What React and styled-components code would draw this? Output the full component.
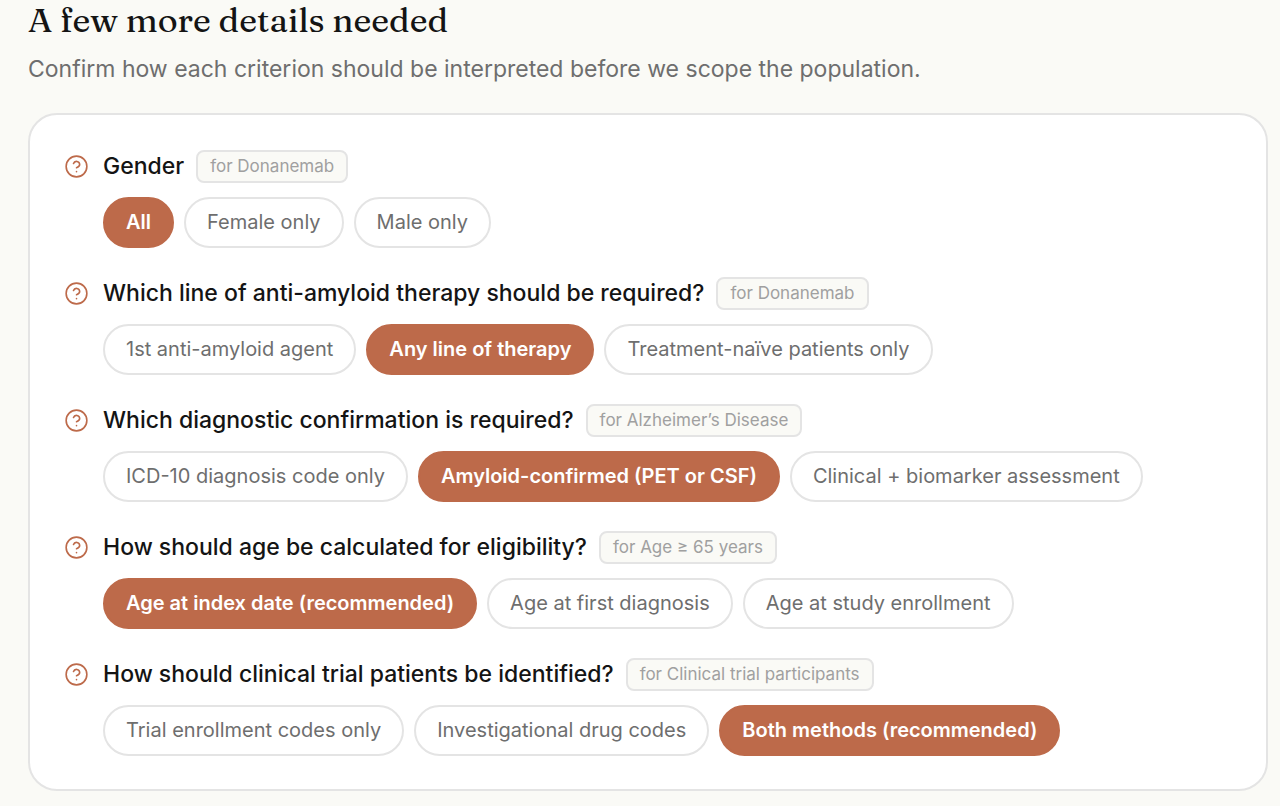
import React, { useState } from "react";
import styled, { createGlobalStyle } from "styled-components";

const GlobalStyle = createGlobalStyle`
  *, *::before, *::after { box-sizing: border-box; }
  body {
    margin: 0;
    background: #fafaf6;
    color: #141414;
    font-family: Inter, "Liberation Sans", sans-serif;
    -webkit-font-smoothing: antialiased;
  }
`;

const Page = styled.main`
  padding: 0 12px 15px 28px;
`;

const Title = styled.h1`
  margin: 0;
  font-family: Fraunces, "Liberation Serif", serif;
  font-size: 34px;
  line-height: 40px;
  font-weight: 500;
`;

const Subtitle = styled.p`
  margin: 13px 0 27px;
  color: #6e6e6e;
  font-size: 23px;
  line-height: 33px;
`;

const Card = styled.section`
  display: flex;
  flex-direction: column;
  gap: 29px;
  padding: 35px 35px 33px;
  background: #ffffff;
  border: 2px solid #e4e4e4;
  border-radius: 29px;
`;

const Question = styled.div`
  display: grid;
  grid-template-columns: 23px 1fr;
  column-gap: 15px;
  row-gap: 14px;
  align-items: center;
`;

const Heading = styled.div`
  display: flex;
  flex-wrap: wrap;
  align-items: center;
  gap: 12px;
`;

const Prompt = styled.h2`
  margin: 0;
  font-size: 23px;
  line-height: 33px;
  font-weight: 500;
`;

const Tag = styled.span`
  height: 33px;
  padding: 0 12px;
  background: #fafaf6;
  border: 2px solid #e4e4e4;
  border-radius: 8px;
  color: #a0a0a0;
  font-size: 17px;
  line-height: 29px;
`;

const Options = styled.div`
  grid-column: 2;
  display: flex;
  flex-wrap: wrap;
  gap: 10px;
`;

const Pill = styled.button`
  height: 51px;
  padding: 0 21px;
  border: 2px solid ${(p) => (p.$selected ? "#bd6a4a" : "#e4e4e4")};
  border-radius: 26px;
  background: ${(p) => (p.$selected ? "#bd6a4a" : "#ffffff")};
  color: ${(p) => (p.$selected ? "#ffffff" : "#6e6e6e")};
  font-family: inherit;
  font-size: 20px;
  line-height: 47px;
  font-weight: ${(p) => (p.$selected ? 600 : 400)};
  cursor: pointer;
`;

const Icon = styled.svg`
  display: block;
  width: 23px;
  height: 23px;
  fill: none;
  stroke: #bd6a4a;
  stroke-width: 1.7;
  stroke-linecap: round;
  stroke-linejoin: round;
`;

const QuestionIcon = () => (
  <Icon viewBox="0 0 24 24" aria-hidden="true">
    <circle cx="12" cy="12" r="10.8" />
    <path d="M8.9 8.9a3.3 3.3 0 0 1 6.4 1.1c0 2.2-3.3 3.3-3.3 3.3" />
    <path d="M12 17.4h.01" />
  </Icon>
);

const questions = [
  {
    id: "gender",
    prompt: "Gender",
    tag: "for Donanemab",
    options: ["All", "Female only", "Male only"],
    initial: 0,
  },
  {
    id: "line",
    prompt: "Which line of anti-amyloid therapy should be required?",
    tag: "for Donanemab",
    options: ["1st anti-amyloid agent", "Any line of therapy", "Treatment-naïve patients only"],
    initial: 1,
  },
  {
    id: "diagnostic",
    prompt: "Which diagnostic confirmation is required?",
    tag: "for Alzheimer’s Disease",
    options: ["ICD-10 diagnosis code only", "Amyloid-confirmed (PET or CSF)", "Clinical + biomarker assessment"],
    initial: 1,
  },
  {
    id: "age",
    prompt: "How should age be calculated for eligibility?",
    tag: "for Age ≥ 65 years",
    options: ["Age at index date (recommended)", "Age at first diagnosis", "Age at study enrollment"],
    initial: 0,
  },
  {
    id: "trial",
    prompt: "How should clinical trial patients be identified?",
    tag: "for Clinical trial participants",
    options: ["Trial enrollment codes only", "Investigational drug codes", "Both methods (recommended)"],
    initial: 2,
  },
];

function QuestionBlock({ id, prompt, tag, options, initial }) {
  const [selected, setSelected] = useState(initial);
  return (
    <Question>
      <QuestionIcon />
      <Heading>
        <Prompt id={id}>{prompt}</Prompt>
        <Tag>{tag}</Tag>
      </Heading>
      <Options role="group" aria-labelledby={id}>
        {options.map((option, i) => (
          <Pill
            key={option}
            type="button"
            aria-pressed={i === selected}
            $selected={i === selected}
            onClick={() => setSelected(i)}
          >
            {option}
          </Pill>
        ))}
      </Options>
    </Question>
  );
}

export default function App() {
  return (
    <>
      <GlobalStyle />
      <Page>
        <Title>A few more details needed</Title>
        <Subtitle>Confirm how each criterion should be interpreted before we scope the population.</Subtitle>
        <Card>
          {questions.map((q) => (
            <QuestionBlock key={q.id} {...q} />
          ))}
        </Card>
      </Page>
    </>
  );
}
